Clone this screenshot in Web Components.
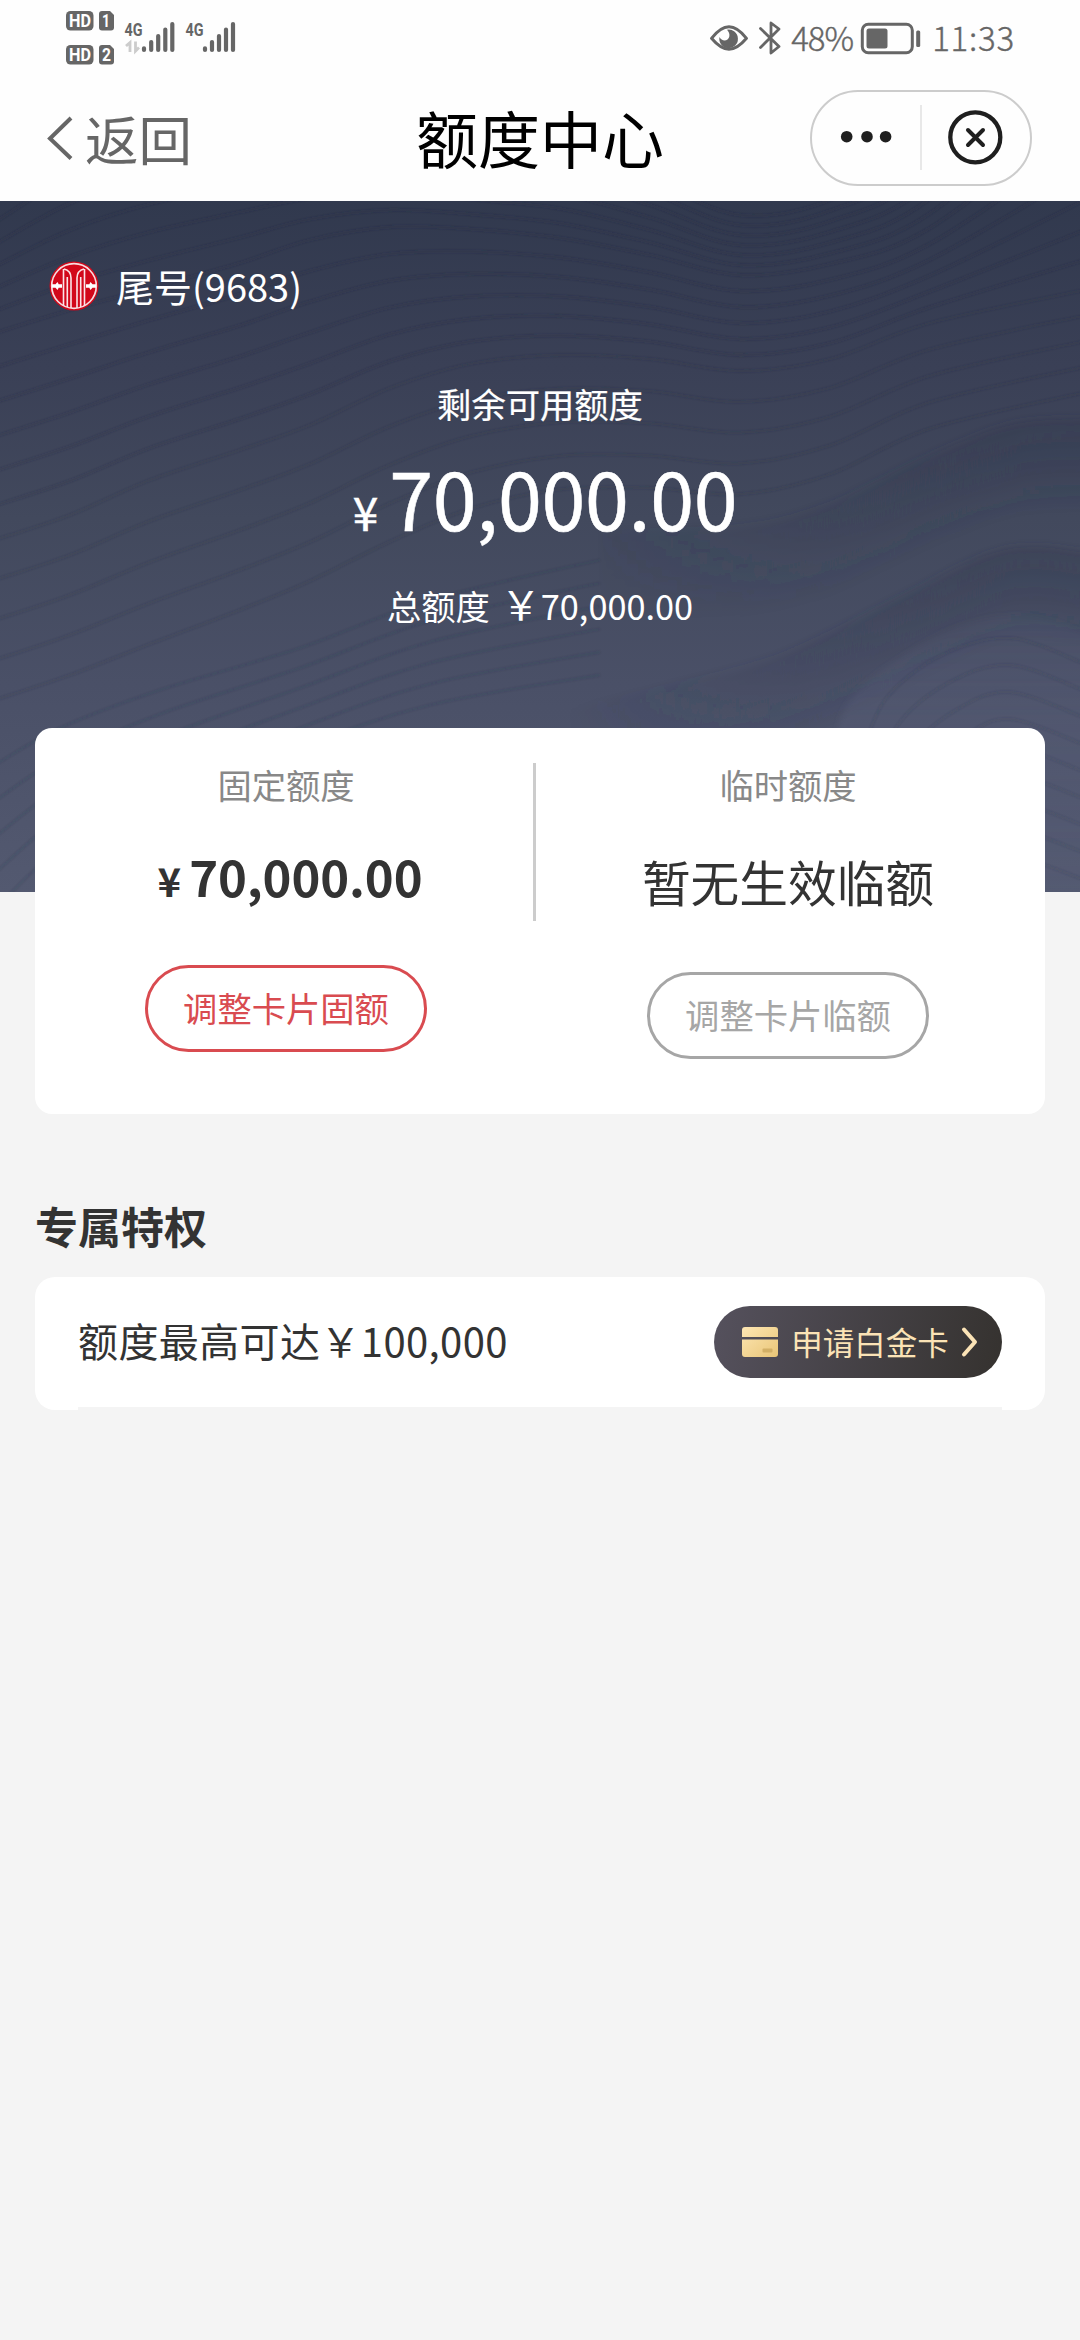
<!DOCTYPE html>
<html lang="zh-CN">
<head>
<meta charset="utf-8">
<title>额度中心</title>
<style>
html,body{margin:0;padding:0}
body{background:#f4f4f4;min-height:2340px;font-family:"Noto Sans CJK SC",sans-serif;color:#333}
</style>
</head>
<body>
<credit-page></credit-page>
<script>
const define = (name, html, setup) => customElements.define(name, class extends HTMLElement {
  constructor() {
    super();
    const t = document.createElement('template');
    t.innerHTML = html;
    this.attachShadow({mode: 'open'}).append(t.content.cloneNode(true));
    if (setup) setup(this.shadowRoot);
  }
});

define('status-bar', `
<style>
:host{display:flex;height:80px;background:#fefefe;color:#666;justify-content:space-between;box-sizing:border-box;padding:0 65px 0 60px}
svg{display:block;flex:none}
.r{display:flex;align-items:center;height:75px}
span{font-size:33px;line-height:40px;font-weight:300;white-space:nowrap;-webkit-text-stroke:.4px #666}
.p{letter-spacing:-1px;margin:-2px 7px 0 9px}
.t{margin:-2px 0 0 10px;letter-spacing:.8px}
</style>
<svg width="190" height="80" viewBox="60 0 190 80" font-family="Roboto,sans-serif" font-weight="700">
 <g fill="#666">
  <rect x="66" y="11" width="27.500" height="19.500" rx="4.500"/><path d="M102 11h8l4 4v12.500a3 3 0 0 1-3 3h-9a3 3 0 0 1-3-3v-13.500a3 3 0 0 1 3-3z"/>
  <rect x="66" y="45" width="27.500" height="19.500" rx="4.500"/><path d="M102 45h8l4 4v12.500a3 3 0 0 1-3 3h-9a3 3 0 0 1-3-3v-13.500a3 3 0 0 1 3-3z"/>
 </g>
 <g fill="#fff" font-size="17.500">
  <text x="69" y="27" textLength="22" lengthAdjust="spacingAndGlyphs">HD</text><text x="102" y="27" textLength="8" lengthAdjust="spacingAndGlyphs">1</text>
  <text x="69" y="61" textLength="22" lengthAdjust="spacingAndGlyphs">HD</text><text x="102" y="61" textLength="9" lengthAdjust="spacingAndGlyphs">2</text>
 </g>
 <g fill="#666" font-size="19">
  <text x="124.500" y="35.500" textLength="18" lengthAdjust="spacingAndGlyphs">4G</text><text x="185.500" y="35.500" textLength="18" lengthAdjust="spacingAndGlyphs">4G</text>
 </g>
 <g stroke="#666" stroke-width="4.200" stroke-linecap="round">
  <path d="M144 48.300v1.700M151.200 42v8M158.200 36v14M165.300 29.500v20.500M172.300 24v26"/>
  <path d="M205 48.300v1.700M212 42v8M219 36v14M226 29.500v20.500M233 24v26"/>
 </g>
 <path d="M126 46l4-3.500V52M135.500 41.500V51l3.500-3.500" fill="none" stroke="#ccc" stroke-width="2.800"/>
</svg>
<div class="r">
<svg width="73" height="44" viewBox="707 15 73 44" fill="none" stroke="#666">
 <path d="M709.500 37.300C716 29 721 25.700 727 25.700S738 29 744.500 37.300C738 45 733 48.300 727 48.300S716 45 709.500 37.300z" stroke-width="3" stroke-linejoin="round"/>
 <path d="M725 28.700a9.300 9.300 0 1 1-7.500 7.300c1.500 3.500 5.500 4.500 8 2.500 2.800-2.200 2.500-7-.5-9.800z" fill="#666" stroke="none"/>
 <path d="M758.500 27.500L777 45.500l-8 6.500V22l8 6-18.500 18.500" stroke-width="2.800" stroke-linejoin="round" stroke-linecap="round"/>
</svg>
<span class="p">48%</span>
<svg width="62" height="44" viewBox="858 15 62 44"><rect x="860.300" y="23.300" width="50" height="28.500" rx="6" fill="none" stroke="#666" stroke-width="3"/><rect x="864.500" y="27.500" width="21" height="20" rx="2.500" fill="#666"/><rect x="914.200" y="29.500" width="4" height="16.500" rx="1.500" fill="#666"/></svg>
<span class="t">11:33</span>
</div>`);

define('nav-bar', `
<style>
:host{display:grid;grid-template-columns:1fr auto 1fr;height:121px;background:#fefefe;box-sizing:border-box;padding:0 48px}
svg{display:block}
.b{display:flex;align-items:center;color:#666;font-size:53.500px;height:116px;line-height:60px;gap:11px}
.b svg{margin-left:-1px}
h1{margin:0;font-weight:400;font-size:62px;line-height:115px;color:#000}
.c{justify-self:end;margin-top:10px;width:222px;height:96px;box-sizing:border-box;border:2px solid #ccc;border-radius:48px;display:flex}
</style>
<div class="b"><svg width="27" height="44" viewBox="48 116 27 44"><path d="M72 118L51 138.500L72 158.500" fill="none" stroke="#666" stroke-width="4"/></svg><slot name="back"></slot></div>
<h1><slot></slot></h1>
<div class="c"><svg width="218" height="92" viewBox="812 92 218 92">
<g fill="#1f1f1f"><circle cx="846.700" cy="136.700" r="5.800"/><circle cx="867" cy="136.700" r="5.800"/><circle cx="885.600" cy="136.700" r="5.800"/></g>
<path d="M921 105v65" stroke="#e8e8e8" stroke-width="2"/>
<g fill="none" stroke="#1f1f1f"><circle cx="975.300" cy="137.300" r="25" stroke-width="4.300"/><path d="M968 130l15 15M983 130l-15 15" stroke-width="4" stroke-linecap="round"/></g>
</svg></div>`);

define('wave-backdrop', `
<style>
:host{display:block;width:1080px;height:691px;background:linear-gradient(#31394e 0%,#3a4056 24%,#42495d 46%,#4a5067 70%,#535970 100%)}
svg{display:block}
</style>
<svg width="1080" height="691" viewBox="0 201 1080 691">
<defs>
<linearGradient id="r" gradientUnits="userSpaceOnUse" x1="560" y1="0" x2="1000" y2="0"><stop offset="0" stop-color="#2f364b" stop-opacity="0"/><stop offset="1" stop-color="#2f364b"/></linearGradient>
<linearGradient id="h" x1="0" y1="0" x2="0" y2="1"><stop offset="0" stop-color="#5b617b" stop-opacity=".1"/><stop offset=".4" stop-color="#5b617b" stop-opacity=".35"/><stop offset="1" stop-color="#5b617b" stop-opacity=".15"/></linearGradient>
<filter id="f"><feGaussianBlur stdDeviation="1.200"/></filter><filter id="g" filterUnits="userSpaceOnUse" x="500" y="380" width="620" height="540"><feGaussianBlur stdDeviation="3"/></filter>
</defs>
<g id="s" fill="none" stroke="url(#r)" stroke-width="12" filter="url(#g)"></g>
<path d="M838 740C838 705 858 686 905 655C960 617 1020 600 1080 632H1100V892H838z" fill="url(#h)" filter="url(#g)"/>
<g id="w" fill="none" stroke="#242b42" stroke-width="2.800" filter="url(#f)"></g>
</svg>`, root => {
  // Contours are interpolated between these height samples, one row per ridge.
  const xs = [-5,70,150,240,310,390,470,560,650,740,830,930,1085];
  const keys = [
    [200,150,120,110,115,125,140,150,180,215,200,140,-60],
    [333,310,288,263,240,227,229,238,255,275,264,228,110],
    [540,515,480,450,425,388,364,355,359,371,359,323,290],
    [740,715,685,650,620,580,545,523,520,525,503,455,418]
  ];
  const smooth = p => {
    let d = `M${p[0][0]} ${p[0][1]}`;
    for (let i = 0; i < p.length - 1; i++) {
      const a = p[i-1] || p[i], b = p[i], c = p[i+1], e = p[i+2] || c;
      d += `C${b[0]+(c[0]-a[0])/6} ${b[1]+(c[1]-a[1])/6} ${c[0]-(e[0]-b[0])/6} ${c[1]-(e[1]-b[1])/6} ${c[0]} ${c[1]}`;
    }
    return d;
  };
  let out = '';
  const add = (pts, o) => out += `<path d="${smooth(pts)}" opacity="${o}"/>`;
  for (let k = 0; k < keys.length - 1; k++) {
    const n = k === 2 ? 5 : 6;
    for (let j = 0; j < n; j++) {
      const t = j / n;
      add(xs.map((x, i) => [x, keys[k][i]*(1-t) + keys[k+1][i]*t]), k < 2 ? .22 : .17);
    }
  }
  // Lower left slopes
  for (let j = 0; j < 6; j++) add([[-5,765+j*36],[60,728+j*30],[160,690+j*24],[300,648+j*20],[430,600+j*21],[600,560+j*23]], .12);
  // Concentric hill at the lower right
  for (let j = 0; j < 9; j++) add([[860+j*14,760+j*26],[885+j*12,700+j*26],[940+j*8,656+j*27],[1010,638+j*27],[1085,664+j*27]], .13);
  root.getElementById('w').innerHTML = out;

  // Soft shadow falling away below the two main ridges
  const ridges = [
    [[600,530],[740,525],[830,503],[930,455],[1020,422],[1120,418]],
    [[560,710],[671,684],[781,654],[900,597],[985,555],[1040,546],[1120,558]]
  ];
  let shade = '';
  for (const r of ridges) for (let j = 0; j < 10; j++)
    shade += `<path d="${smooth(r.map(([x, y]) => [x, y + 5 + j*9]))}" opacity="${(.24*(1 - j/10)).toFixed(3)}"/>`;
  root.getElementById('s').innerHTML = shade;
});

define('bank-logo', `
<style>:host{display:block;width:50px;height:50px}svg{display:block}</style>
<svg width="50" height="50" viewBox="0 0 50 50">
<circle cx="25" cy="25" r="24.500" fill="#d2081a"/><circle cx="25" cy="25" r="22.300" fill="none" stroke="#f6dcdf" stroke-width="1.700"/>
<g fill="none" stroke="#fbe3e6" stroke-width="1.600">
<path d="M15 8C19 9 22 12 22 17V47M35 8C31 9 28 12 28 17V47"/>
<path d="M14.500 8V45M35.500 8V45M18.300 16V46M31.700 16V46"/>
</g>
<path d="M8.500 21l1.200 2.200h3.300v3.600H9.700L8.500 29l-2-2.200H3v-3.600h3.500zM41.500 21l-1.200 2.200H37v3.600h3.300l1.200 2.200 2-2.200H47v-3.600h-3.500z" fill="#fff"/>
</svg>`);

define('limit-hero', `
<style>
:host{display:grid;height:691px;color:#fff;overflow:hidden}
:host>*{grid-area:1/1}
.c{z-index:1;display:flex;flex-direction:column;align-items:center}
.a{align-self:flex-start;display:flex;align-items:center;gap:17px;height:50px;margin:60px 0 0 49px;font-size:38px;line-height:48px}
.l{margin-top:72px;font-size:34.300px;line-height:40px;-webkit-text-stroke:.2px}
.m{margin-top:34px;padding-left:10px;display:flex;align-items:baseline;gap:11px;font-size:79px;line-height:80px;height:80px;-webkit-text-stroke:.5px}
.m span{letter-spacing:-.3px}
.m small{font-size:46px}
.t{margin-top:47px;display:flex;align-items:baseline;font-size:34.300px;height:40px;line-height:38px}
.t b{font-weight:400;font-size:40px;margin:0 0 0 11px}
</style>
<wave-backdrop></wave-backdrop>
<div class="c">
<div class="a"><bank-logo></bank-logo><slot name="account"></slot></div>
<div class="l">剩余可用额度</div>
<div class="m"><small>¥</small><span>70,000.00</span></div>
<div class="t"><span>总额度</span><b>￥</b><span>70,000.00</span></div>
</div>`);

define('pill-button', `
<style>
:host{display:block;box-sizing:border-box;width:282px;height:87px;border:3px solid currentColor;border-radius:44px;text-align:center;font-size:34.300px;line-height:78px;color:#a6a6a6}
:host([primary]){color:#d94b50}
</style><slot></slot>`);

define('limit-column', `
<style>
:host{display:flex;flex-direction:column;align-items:center;box-sizing:border-box;padding-top:36px}
.l{font-size:34.300px;line-height:40px;color:#888}
</style>
<div class="l"><slot name="label"></slot></div><slot></slot>`);

define('limit-card', `
<style>
:host{display:flex;position:relative;z-index:2;margin:-164px 35px 0;height:386px;background:#fff;border-radius:17px}
limit-column{width:502px;flex:none}
.d{width:3px;height:158px;background:#ccc;margin-top:35px;margin-left:-4px;margin-right:1px;flex:none}
.n{display:flex;align-items:baseline;gap:8px;margin-top:42px;padding-left:8px;height:60px;line-height:60px;font-size:49px;font-weight:700;color:#333}
.n span{letter-spacing:-.1px}
.n small{font-size:40px}
.x{margin-top:47px;height:60px;line-height:60px;font-size:48.700px;color:#333}
.p1{margin-top:59px}.p2{margin-top:61px}
</style>
<limit-column><span slot="label">固定额度</span><div class="n"><small>¥</small><span>70,000.00</span></div><pill-button class="p1" primary>调整卡片固额</pill-button></limit-column>
<div class="d"></div>
<limit-column><span slot="label">临时额度</span><div class="x">暂无生效临额</div><pill-button class="p2">调整卡片临额</pill-button></limit-column>`);

define('gold-button', `
<style>
:host{display:flex;box-sizing:border-box;width:288px;height:72px;border-radius:36px;background:linear-gradient(100deg,#55515d,#35322f);color:#fbe3b6;align-items:center;padding:0 23px 0 27px;font-size:31.500px;line-height:70px;justify-content:space-between}
svg{display:block}.t{height:72px}
</style>
<svg width="38" height="32" viewBox="0 0 38 32"><defs><linearGradient id="q" x1="0" y1="0" x2="1" y2="1"><stop stop-color="#fde6b3"/><stop offset="1" stop-color="#e9c577"/></linearGradient></defs>
<path d="M1 11V4a3 3 0 0 1 3-3h30a3 3 0 0 1 3 3v7zM1 13.500h36V28a3 3 0 0 1-3 3H4a3 3 0 0 1-3-3z" fill="url(#q)"/><rect x="21.500" y="22.500" width="10" height="4" rx="1" fill="#d3b066"/></svg>
<div class="t"><slot></slot></div>
<svg width="18" height="32" viewBox="0 0 18 32"><path d="M3 3.500l11 12.500L3 28.500" fill="none" stroke="#fbe3b6" stroke-width="4" stroke-linecap="round" stroke-linejoin="round"/></svg>`);

define('privilege-section', `
<style>
:host{display:block;margin:83px 35px 0}
h2{margin:0;font-size:43px;line-height:56px;font-weight:700;color:#333}
.k{margin-top:24px;height:133px;background:#fff;border-radius:20px;box-sizing:border-box;padding:0 43px;display:flex;flex-direction:column}
.r{height:130px;display:flex;justify-content:space-between;align-items:center;font-size:40px;line-height:126px}
.r span{height:130px;white-space:nowrap;letter-spacing:.4px}
.b{height:3px;background:#f4f4f4}
</style>
<h2><slot></slot></h2>
<div class="k"><div class="r"><span>额度最高可达￥100,000</span><gold-button>申请白金卡</gold-button></div><div class="b"></div></div>`);

define('credit-page', `
<style>:host{display:flex;flex-direction:column;width:1080px;height:2340px;background:#f4f4f4;overflow:hidden}:host>*{flex:none}</style>
<status-bar></status-bar>
<nav-bar><span slot="back">返回</span>额度中心</nav-bar>
<limit-hero><span slot="account">尾号(9683)</span></limit-hero>
<limit-card></limit-card>
<privilege-section>专属特权</privilege-section>`);
</script>
</body>
</html>
